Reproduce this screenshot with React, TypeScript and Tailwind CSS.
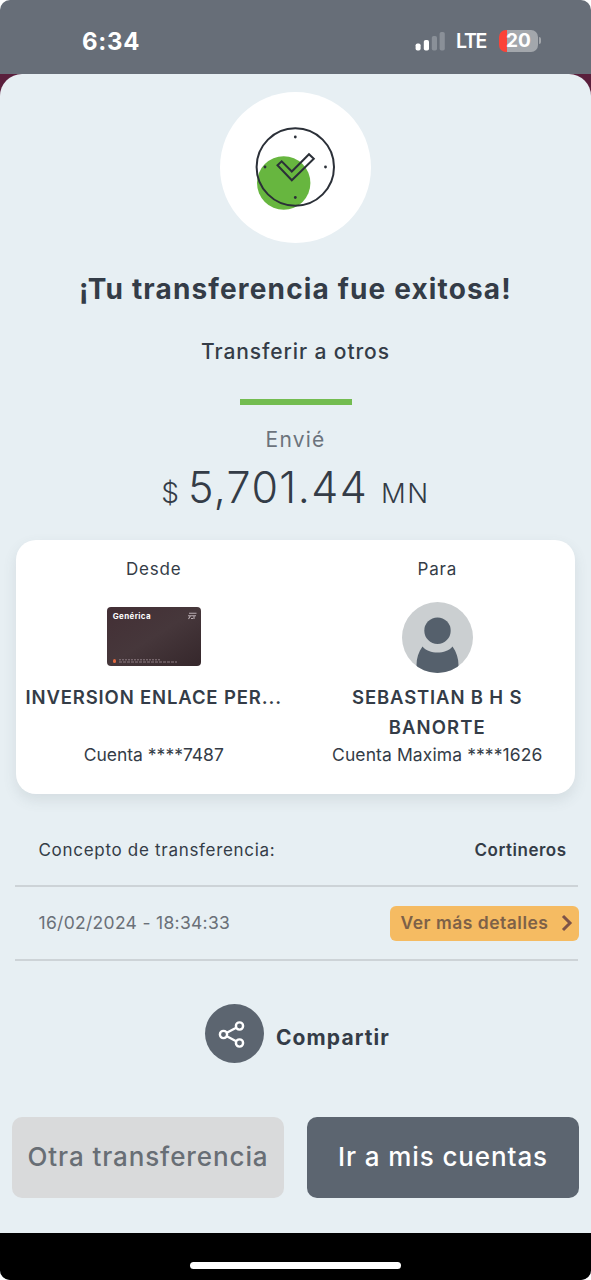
import React from 'react';

const StatusBar: React.FC = () => (
  <div className="flex h-[74px] items-start justify-between pl-[82px] pr-[50px] pt-[29px] text-white">
    <span className="text-[24px] font-bold leading-[25px] tracking-[0.7px]">6:34</span>
    <div className="flex items-center">
      <svg width="30" height="22" viewBox="0 0 30 22">
        <rect x="0.6" y="13.5" width="5" height="7" rx="1.8" fill="#fff" />
        <rect x="8.8" y="10" width="5.2" height="10.5" rx="1.8" fill="#fff" />
        <rect x="16.8" y="6" width="5.2" height="14.5" rx="1.8" fill="#8a9098" />
        <rect x="24.6" y="2" width="5.2" height="18.5" rx="1.8" fill="#8a9098" />
      </svg>
      <span className="ml-[11px] pt-px text-[19.5px] font-semibold leading-[22px] tracking-[-1.3px]">LTE</span>
      <div className="ml-[13px] flex h-[22px] w-[39px] items-center justify-center overflow-hidden rounded-[7px] bg-linear-to-r from-[#fb4237] from-20% to-[#a3a7ac] to-20%">
        <span className="text-[19px] font-bold leading-[22px]">20</span>
      </div>
      <div className="ml-px h-[7px] w-[2px] rounded-r-full bg-[#a3a7ac]" />
    </div>
  </div>
);

const SuccessIcon: React.FC = () => (
  <div className="flex size-[151px] items-center justify-center rounded-full bg-white">
    <svg className="-ml-px" width="84" height="90" viewBox="0 0 84 90" fill="none">
      <circle cx="30.7" cy="60" r="26.7" fill="#67b63f" />
      <g stroke="#2b3038" strokeWidth="2">
        <circle cx="42.3" cy="44" r="38.7" />
        <path d="M24.5 42.2 L28.7 38.3 L38.8 48.5 L56 31.2 L60.8 35.8 L38.8 57.3 Z" />
      </g>
      <g fill="#2b3038">
        <circle cx="42.3" cy="14" r="1.4" />
        <circle cx="72.5" cy="44" r="1.4" />
        <circle cx="42.3" cy="74.5" r="1.4" />
        <circle cx="12" cy="44" r="1.4" />
      </g>
    </svg>
  </div>
);

const BankCard: React.FC = () => (
  <div className="mb-0.5 flex h-[59px] w-[94px] flex-col justify-between rounded-[4px] bg-linear-to-br from-[#432f35] via-[#46373b] to-[#35272b] px-[6px] pb-[3px] pt-[4px]">
    <div className="flex items-center justify-between">
      <span className="text-[8px] font-bold leading-[10px] tracking-[0.35px] text-white">Genérica</span>
      <svg className="-mr-[2px]" width="10" height="8" viewBox="0 0 10 8" fill="none" stroke="#b9adb2" strokeWidth="1.1">
        <path d="M2 1.2 H9.5 M1 3.8 H9 M3.5 3.8 L1.5 7 M7 3.8 V7 M4 6.5 H6" />
      </svg>
    </div>
    <div className="flex items-center gap-[3px]">
      <div className="h-[4px] w-[3px] rounded-full bg-[#e0683f]" />
      <svg width="60" height="4" viewBox="0 0 60 4" stroke="#8d7d83" strokeWidth="1">
        <path d="M0 0.8 H42" strokeDasharray="2 1" />
        <path d="M0 3 H58" strokeDasharray="3 1" />
      </svg>
    </div>
  </div>
);

const Avatar: React.FC = () => (
  <svg width="71" height="71" viewBox="0 0 71 71">
    <defs>
      <clipPath id="avatar">
        <circle cx="35.5" cy="35.5" r="35.5" />
      </clipPath>
    </defs>
    <g clipPath="url(#avatar)">
      <rect width="71" height="71" fill="#cbcfd1" />
      <circle cx="35.5" cy="28.7" r="13.2" fill="#55606c" />
      <path d="M20.5 44.5 C27 52.5 44 52.5 50.5 44.5 C54.5 50 56.5 57 56.5 63 L56.5 71 L14.5 71 L14.5 63 C14.5 56 16.5 50 20.5 44.5 Z" fill="#55606c" />
    </g>
  </svg>
);

const ShareIcon: React.FC = () => (
  <svg width="28" height="28" viewBox="0 0 28 28" fill="none" stroke="#fff" strokeWidth="2.4">
    <circle cx="5.5" cy="14.5" r="3.6" />
    <circle cx="21.5" cy="6" r="3.6" />
    <circle cx="21.5" cy="23" r="3.6" />
    <path d="M8.8 12.8 L18.2 7.8 M8.8 16.2 L18.2 21.2" />
  </svg>
);

export default function App() {
  return (
    <div className="h-[1280px] w-[591px] bg-white font-['Inter',sans-serif] text-[#343c47]">
      <div className="flex h-full flex-col overflow-hidden rounded-[10px] bg-[#676e78]">
        <StatusBar />

        <div className="flex-1 bg-[#5a1f3c]">
          <main className="flex h-[1159px] flex-col items-center whitespace-nowrap rounded-t-[22px] bg-[#e7eff3] pt-[18px]">
            <SuccessIcon />
            <h1 className="mt-[30px] text-[28px] font-bold leading-8 tracking-[1.15px]">¡Tu transferencia fue exitosa!</h1>
            <h2 className="mt-[34px] text-[21px] font-medium leading-[26px] tracking-[0.9px]">Transferir a otros</h2>
            <div className="mt-[34px] h-[6px] w-[112px] bg-[#73bc50]" />
            <p className="mt-[22px] text-[21px] leading-[26px] tracking-[1.2px] text-[#6c737c]">Envié</p>
            <p className="mt-[9px] flex h-[58px] items-baseline leading-[50px]">
              <span className="text-[28px] font-light">$</span>
              <span className="ml-[9px] text-[43px] font-light tracking-[1.4px]">5,701.44</span>
              <span className="ml-[13px] text-[27.5px] font-light tracking-[1.5px]">MN</span>
            </p>

            {/* Origin and destination accounts */}
            <section className="mt-5 grid h-[254px] w-[559px] grid-cols-2 gap-2 rounded-[20px] bg-white pt-[18px] shadow-[0_6px_14px_rgba(70,90,100,0.12)]">
              <div className="flex flex-col items-center">
                <span className="text-[17px] leading-[22px] tracking-[0.8px]">Desde</span>
                <div className="mt-[22px] flex h-[71px] items-center">
                  <BankCard />
                </div>
                <span className="mt-[9px] text-[18.5px] font-semibold leading-[30px] tracking-[0.85px]">INVERSION ENLACE PER...</span>
                <span className="mt-[31px] text-[17.5px] leading-[24px]">Cuenta ****7487</span>
              </div>
              <div className="flex flex-col items-center">
                <span className="text-[17px] leading-[22px] tracking-[0.8px]">Para</span>
                <div className="mt-[22px]">
                  <Avatar />
                </div>
                <span className="mt-[9px] text-[18.5px] font-semibold leading-[30px] tracking-[0.85px]">SEBASTIAN B H S</span>
                <span className="text-[18.5px] font-semibold leading-[30px] tracking-[1.1px]">BANORTE</span>
                <span className="mt-px text-[17.5px] leading-[24px] tracking-[0.1px]">Cuenta Maxima ****1626</span>
              </div>
            </section>

            {/* Transfer details */}
            <section className="ml-px mt-[18px] w-[563px]">
              <div className="flex h-[75px] items-center justify-between border-b-2 border-[#cdd3d7] pl-6 pr-[11px] pt-1 text-[17px]">
                <span className="tracking-[0.7px]">Concepto de transferencia:</span>
                <span className="font-semibold tracking-[0.5px]">Cortineros</span>
              </div>
              <div className="flex h-[74px] items-center justify-between border-b-2 border-[#cdd3d7] pl-6">
                <span className="pt-px text-[17.5px] tracking-[0.3px] text-[#6a7078]">16/02/2024 - 18:34:33</span>
                <button className="-mr-px flex h-[35px] w-[189px] items-center justify-between rounded-[6px] bg-[#f5bb62] pl-[11px] pr-[6px] text-[17.5px] font-semibold tracking-[0.5px] text-[#7d6148]">
                  Ver más detalles
                  <svg width="12" height="18" viewBox="0 0 12 18" fill="none" stroke="#7d5348" strokeWidth="3">
                    <path d="M2 2 L9 9 L2 16" />
                  </svg>
                </button>
              </div>
            </section>

            <button className="ml-1 mt-[43px] flex items-center">
              <span className="flex size-[59px] items-center justify-center rounded-full bg-[#5c6570] pr-1">
                <ShareIcon />
              </span>
              <span className="ml-3 pt-2 text-[21px] font-bold leading-6 tracking-[1.1px]">Compartir</span>
            </button>

            <div className="mt-[54px] grid w-[567px] grid-cols-2 gap-[23px] text-[26px] font-medium tracking-[0.9px]">
              <button className="h-[81px] rounded-[10px] bg-[#d9dadb] pb-[2px] text-[#686e75]">Otra transferencia</button>
              <button className="h-[81px] rounded-[10px] bg-[#5c6570] pb-[2px] text-white">Ir a mis cuentas</button>
            </div>
          </main>
        </div>

        <div className="flex h-[47px] justify-center bg-black pt-[29px]">
          <div className="h-[7px] w-[211px] rounded-full bg-white" />
        </div>
      </div>
    </div>
  );
}
